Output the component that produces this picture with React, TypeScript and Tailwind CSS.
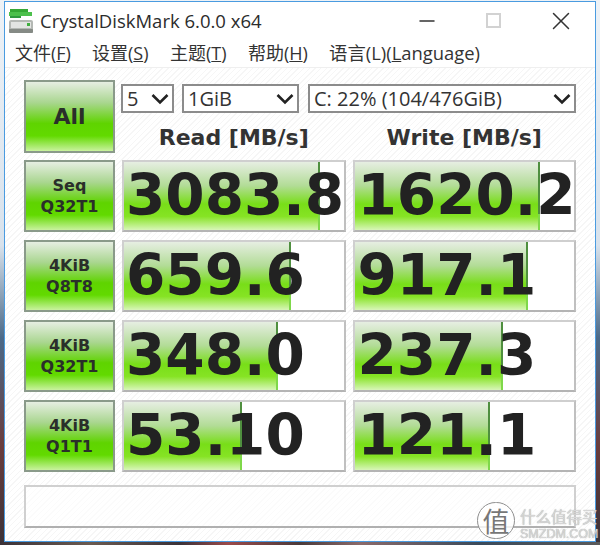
import React from 'react';
import { Minus, X } from 'lucide-react';

const rows = [
  { top: 'Seq', bottom: 'Q32T1', read: '3083.8', readBar: 196, write: '1620.2', writeBar: 185 },
  { top: '4KiB', bottom: 'Q8T8', read: '659.6', readBar: 167, write: '917.1', writeBar: 173 },
  { top: '4KiB', bottom: 'Q32T1', read: '348.0', readBar: 154, write: '237.3', writeBar: 148 },
  { top: '4KiB', bottom: 'Q1T1', read: '53.10', readBar: 118, write: '121.1', writeBar: 135 },
];

const menus = [
  { label: '文件(', key: 'F', width: 'w-[77px]' },
  { label: '设置(', key: 'S', width: 'w-[78px]' },
  { label: '主题(', key: 'T', width: 'w-[78px]' },
  { label: '帮助(', key: 'H', width: 'w-[81px]' },
];

const greenButton =
  'border-2 border-[#8a9a8a] bg-[linear-gradient(to_bottom,#e6eee2_0%,#a9d68f_30%,#5fd400_60%,#62da00_78%,#c9f29e_100%)] text-[#2a2f2a] font-bold';

const Combo = ({ label, className }: { label: string; className: string }) => (
  <div className={`h-[29px] border-2 border-[#8c8c8c] bg-white flex items-center justify-between pl-[4px] pr-[3px] font-['Open_Sans',sans-serif] text-[20px] text-[#333] ${className}`}>
    <span>{label}</span>
    <svg width="18" height="12" viewBox="0 0 18 12" fill="none" stroke="#222" strokeWidth="2.6">
      <polyline points="1.5,2 9,9.5 16.5,2" />
    </svg>
  </div>
);

const Meter = ({ value, bar, inset }: { value: string; bar: number; inset: string }) => (
  <div className="relative h-[72px] border-2 border-[#cfcfcf] border-b-[#b4b4b4] border-r-[#c0c0c0] bg-white overflow-hidden">
    <div
      className="absolute left-0 top-0 bottom-0 bg-[linear-gradient(to_bottom,#e6eee2_0%,#b2dc96_35%,#78de18_62%,#86e324_80%,#d8f6b8_100%)]"
      style={{ width: bar }}
    >
      <div className="absolute right-0 top-0 h-[52px] w-[2px] bg-[#4f8f3f]" />
      <div className="absolute right-0 bottom-0 h-[16px] w-[2px] bg-[#7fd84a]" />
    </div>
    <div className={`relative h-full flex items-center text-[56.5px] leading-none font-bold text-[#222] whitespace-nowrap ${inset}`}>
      {value}
    </div>
  </div>
);

export default function App() {
  return (
    <div className="relative h-[545px] w-[600px] overflow-hidden bg-[linear-gradient(to_bottom,#eef2f6_0%,#d8e2ec_45%,#4c6a88_62%,#6a3c3c_82%,#3a3238_100%)] pt-[1px] pl-[4px] pr-[4px] font-['DejaVu_Sans',sans-serif]">
      {/* Window */}
      <div className="h-[541px] w-[592px] border border-[#4a9be0] bg-white flex flex-col">
        {/* Title bar */}
        <div className="h-[37px] flex items-center shrink-0 pl-[4px]">
          <svg width="24" height="24" viewBox="0 0 24 24" className="mr-[7px] mt-[1px]">
            <rect x="1" y="0" width="18" height="3" fill="#35a835" />
            <rect x="0" y="3" width="23" height="4" fill="#4cc04c" />
            <rect x="1" y="7" width="11" height="2" fill="#2f9a3f" />
            <rect x="0" y="11" width="24" height="13" rx="2" fill="#b4b8b4" />
            <rect x="2" y="13" width="20" height="6" fill="#e2e4e2" />
            <rect x="0" y="20" width="24" height="4" rx="1" fill="#858a85" />
            <rect x="18" y="14" width="3" height="3" fill="#3fae3f" />
          </svg>
          <span className="font-['Open_Sans',sans-serif] text-[18.5px] text-[#2c2c2c]">CrystalDiskMark 6.0.0 x64</span>
          <div className="ml-auto flex items-center text-[#333]">
            <Minus className="h-[24px] w-[24px] mr-[47px]" strokeWidth={1.5} />
            <div className="h-[15px] w-[15px] mr-[45px] border-2 border-[#d2d2d2]" />
            <X className="h-[30px] w-[30px] mr-[19px]" strokeWidth={1.2} />
          </div>
        </div>

        {/* Menu */}
        <div className="h-[28px] flex items-center shrink-0 pl-[10px] text-[18px] text-[#333] font-['Open_Sans','Noto_Sans_CJK_SC',sans-serif] whitespace-nowrap">
          {menus.map((m) => (
            <span key={m.key} className={m.width}>
              {m.label}
              <span className="underline">{m.key}</span>)
            </span>
          ))}
          <span className="text-[18.4px]">
            语言(L)(<span className="underline">L</span>anguage)
          </span>
        </div>

        {/* Client area */}
        <div className="flex-1 bg-[repeating-linear-gradient(135deg,#ffffff_0px,#ffffff_3px,#f6f6f6_3px,#f6f6f6_4px)] border-t border-[#efefef] pt-[12px] pl-[19px] pr-[19px]">
          {/* Top controls */}
          <div className="flex gap-[7px]">
            <div className={`w-[91px] h-[73px] shrink-0 flex items-center justify-center text-[22px] ${greenButton}`}>All</div>
            <div className="flex-1">
              <div className="flex pt-[4px] -ml-[1px]">
                <Combo label="5" className="w-[53px] mr-[8px]" />
                <Combo label="1GiB" className="w-[117px] mr-[9px]" />
                <Combo label="C: 22% (104/476GiB)" className="w-[268px]" />
              </div>
              <div className="grid grid-cols-2 gap-[7px] mt-[10px] text-center text-[22px] leading-[30px] font-bold text-[#333]">
                <div>Read [MB/s]</div>
                <div>Write [MB/s]</div>
              </div>
            </div>
          </div>

          {/* Results */}
          <div className="mt-[7px] flex flex-col gap-[8px]">
            {rows.map((row) => (
              <div key={row.bottom} className="flex gap-[7px]">
                <div className={`w-[91px] h-[72px] shrink-0 flex flex-col items-center justify-center text-[16px] leading-[21px] ${greenButton}`}>
                  <span>{row.top}</span>
                  <span>{row.bottom}</span>
                </div>
                <div className="flex-1 grid grid-cols-2 gap-[7px]">
                  <Meter value={row.read} bar={row.readBar} inset="pl-[2px]" />
                  <Meter value={row.write} bar={row.writeBar} inset="pl-[3px]" />
                </div>
              </div>
            ))}
          </div>

          {/* Comment box */}
          <div className="mt-[13px] h-[43px] border-2 border-t-[#d0d0d0] border-l-[#d0d0d0] border-r-[#d0d0d0] border-b-[#b0b0b0] bg-white/60" />
        </div>
      </div>

      {/* Desktop showing under the window */}
      <div className="absolute inset-x-0 bottom-0 h-[3px] bg-[linear-gradient(to_right,#3a3238_0%,#6a5a50_15%,#3a3238_30%,#9a4a4a_38%,#4a3a3a_50%,#8a6a6a_60%,#3a4a5a_80%,#5a5a5a_100%)]" />

      {/* Watermark */}
      <div className="absolute left-[477px] top-[502px] flex items-start">
        <div className="h-[37px] w-[38px] shrink-0 rounded-full border border-[#8f8f8f] bg-white/80 flex items-center justify-center text-[27px] leading-none text-[#777] font-['Noto_Sans_CJK_SC',sans-serif]">值</div>
        <div className="ml-[5px] pt-[3px] flex flex-col text-[#d6d6d6] [text-shadow:0_0_1px_#999]">
          <span className="text-[15.5px] leading-[22px] whitespace-nowrap font-['Noto_Sans_CJK_SC',sans-serif]">什么值得买</span>
          <span className="text-[12.5px] leading-[15px] whitespace-nowrap font-['Liberation_Sans',sans-serif]">SMZDM.COM</span>
        </div>
      </div>
    </div>
  );
}
